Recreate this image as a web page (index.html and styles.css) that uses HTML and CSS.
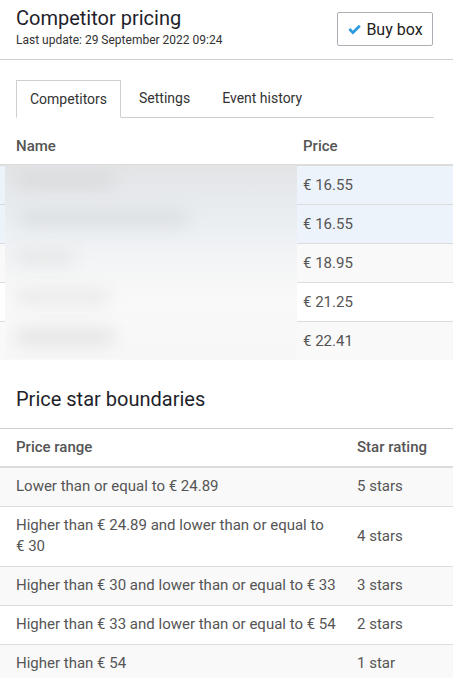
FILE: index.html
```html
<!DOCTYPE html>
<html>
<head>
<meta charset="utf-8">
<link rel="stylesheet" href="styles.css">
</head>
<body>
<header class="header">
  <div class="titles">
    <h1 class="title">Competitor pricing</h1>
    <div class="subtitle">Last update: 29 September 2022 09:24</div>
  </div>
  <button class="btn"><svg class="check" viewBox="0 0 16 16" width="15" height="15"><path d="M1.5 8.6 L3.6 6.5 L6.3 9.2 L12.6 2.9 L14.7 5 L6.3 13.4 Z" fill="#2a9ae0"/></svg>Buy box</button>
</header>

<nav class="tabs">
  <div class="tab active">Competitors</div>
  <div class="tab">Settings</div>
  <div class="tab">Event history</div>
</nav>

<div class="tablewrap">
  <table class="grid comp">
    <thead>
      <tr><th class="c-name">Name</th><th>Price</th></tr>
    </thead>
    <tbody>
      <tr class="hl"><td></td><td>€&nbsp;16.55</td></tr>
      <tr class="hl"><td></td><td>€&nbsp;16.55</td></tr>
      <tr class="odd"><td></td><td>€&nbsp;18.95</td></tr>
      <tr><td></td><td>€&nbsp;21.25</td></tr>
      <tr class="odd"><td></td><td>€&nbsp;22.41</td></tr>
    </tbody>
  </table>
  <div class="blur">
    <span class="blob b1"></span>
    <span class="blob b2"></span>
    <span class="blob b3"></span>
    <span class="blob b4"></span>
    <span class="blob b5"></span>
  </div>
</div>

<h2 class="section">Price star boundaries</h2>

<table class="grid stars">
  <thead>
    <tr><th class="c-range">Price range</th><th>Star rating</th></tr>
  </thead>
  <tbody>
    <tr class="odd"><td>Lower than or equal to €&nbsp;24.89</td><td>5 stars</td></tr>
    <tr><td>Higher than €&nbsp;24.89 and lower than or equal to €&nbsp;30</td><td>4 stars</td></tr>
    <tr class="odd"><td>Higher than €&nbsp;30 and lower than or equal to €&nbsp;33</td><td>3 stars</td></tr>
    <tr><td>Higher than €&nbsp;33 and lower than or equal to €&nbsp;54</td><td>2 stars</td></tr>
    <tr class="odd"><td>Higher than €&nbsp;54</td><td>1 star</td></tr>
  </tbody>
</table>
</body>
</html>
```

FILE: styles.css
```css
* { box-sizing: border-box; }
html, body { margin: 0; padding: 0; background: #fff; }
body {
  font-family: Roboto, "Liberation Sans", Arial, sans-serif;
  color: #555;
  font-size: 15px;
  width: 453px;
  overflow: hidden;
}

.header {
  display: flex;
  justify-content: space-between;
  align-items: flex-start;
  padding: 6px 20px 0 16px;
  height: 60px;
  border-bottom: 1px solid #cfcfcf;
}
.title {
  margin: 0;
  font-size: 20px;
  font-weight: 400;
  line-height: 24px;
  color: #1f1f2b;
}
.subtitle {
  font-size: 12px;
  line-height: 14px;
  margin-top: 3px;
  color: #333;
}
.btn {
  margin-top: 6px;
  width: 96px;
  height: 34px;
  border: 1px solid #aeaeb6;
  border-radius: 2px;
  background: #fff;
  font-family: inherit;
  font-size: 16px;
  color: #222;
  display: flex;
  align-items: center;
  justify-content: center;
  gap: 4px;
  padding: 0;
}
.check { display: block; }

.tabs {
  display: flex;
  margin: 20px 19px 0 16px;
  border-bottom: 1px solid #cfcfcf;
  height: 38px;
}
.tab {
  line-height: 36px;
  padding: 0 16px;
  margin-left: 2px;
  color: #333;
  font-size: 14px;
}
.tab:last-child { margin-left: 0; }
.tab.active {
  margin-left: 0;
  padding: 0 13px;
  border: 1px solid #cfcfcf;
  border-bottom: 1px solid #fff;
  background: #fff;
  margin-bottom: -1px;
  height: 38px;
}

.tablewrap { position: relative; }

.grid {
  width: 100%;
  border-collapse: collapse;
}
.grid th {
  text-align: left;
  font-weight: 500;
  color: #555;
  font-size: 15px;
  line-height: 20px;
  padding: 8px 16px;
  border-bottom: 2px solid #dcdcdc;
}
.grid td {
  padding: 9px 16px;
  line-height: 20px;
  font-size: 15px;
  color: #555;
  border-bottom: 1px solid #dcdcdc;
  vertical-align: middle;
}
.grid tbody tr:last-child td { border-bottom: none; }
.grid tr.odd td { background: #f9f9f9; }
.grid tr.hl td { background: #edf3fa; }

.comp th { padding-top: 18px; }
.comp .c-name { width: 287px; }

.blur {
  position: absolute;
  left: 5px;
  top: 47px;
  width: 292px;
  height: 194px;
  overflow: hidden;
  background: linear-gradient(180deg, #e2e4e6 0%, #e9ecef 22%, #eef1f4 38%, #f4f5f6 52%, #f9f9f9 70%, #f7f7f7 100%);
}
.blob {
  position: absolute;
  display: block;
  background: #dadcde;
  border-radius: 10px;
  filter: blur(8px);
}
.b1 { left: 10px; top: 6px; width: 100px; height: 18px; }
.b2 { left: 14px; top: 44px; width: 170px; height: 18px; background: #dde0e3; }
.b3 { left: 10px; top: 84px; width: 60px; height: 16px; background: #e6e7e8; }
.b4 { left: 10px; top: 124px; width: 95px; height: 16px; background: #eaeaea; }
.b5 { left: 10px; top: 163px; width: 100px; height: 18px; background: #e6e6e6; }

.section {
  margin: 27px 16px 17px;
  font-size: 20px;
  line-height: 24px;
  font-weight: 400;
  color: #1f1f2b;
}

.stars { border-top: 1px solid #cfcfcf; }
.stars th { padding: 8px 16px 9px; }
.stars .c-range { width: 341px; padding-right: 2px; }
.stars td { line-height: 21px; padding: 8px 16px 9px; }
.stars td:first-child { padding-right: 2px; }
```
